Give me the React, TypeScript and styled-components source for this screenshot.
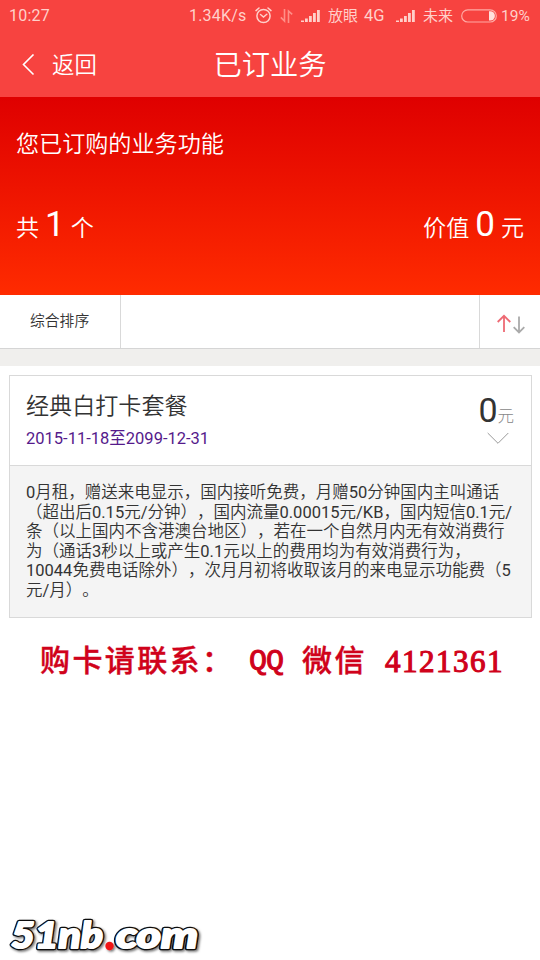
import React from "react";
import styled, { createGlobalStyle } from "styled-components";

const GlobalStyle = createGlobalStyle`
  * { box-sizing: border-box; }
  body {
    margin: 0;
    background: #fff;
    font-family: Roboto, "Noto Sans CJK SC", sans-serif;
    text-spacing-trim: space-all;
    color: #333;
  }
`;

const Screen = styled.div`
  display: flex;
  flex-direction: column;
  width: 540px;
  height: 960px;
  overflow: hidden;
  background: #fff;
  white-space: nowrap;
`;

const Header = styled.header`
  height: 97px;
  background: #f74340;
  color: #fff;
`;

const StatusBar = styled.div`
  display: flex;
  align-items: center;
  height: 32px;
  padding-left: 9px;
  font-size: 16px;
  color: #ffd0ca;
`;

const StatusText = styled.span<{ $w: number; $size?: number; $spacing?: number }>`
  width: ${(p) => p.$w}px;
  font-size: ${(p) => p.$size ?? 16}px;
  letter-spacing: ${(p) => p.$spacing ?? 0}px;
  line-height: 32px;
  flex: none;
`;

const StatusIcon = styled.svg<{ $gap: number }>`
  flex: none;
  margin: -1px ${(p) => p.$gap}px 0 0;
`;

const TitleBar = styled.div`
  display: grid;
  grid-template-columns: 170px 200px 170px;
  align-items: center;
  height: 65px;
`;

const BackButton = styled.button`
  display: flex;
  align-items: center;
  gap: 17px;
  height: 64px;
  padding: 0 0 0 22px;
  border: 0;
  background: none;
  color: #fff;
  font: 350 22.4px/62px Roboto, "Noto Sans CJK SC", sans-serif;
`;

const Title = styled.h1`
  margin: 2px 0 0;
  text-align: center;
  font-size: 28.3px;
  font-weight: 350;
  line-height: 64px;
`;

const Summary = styled.section`
  display: flex;
  flex-direction: column;
  justify-content: space-between;
  height: 198px;
  padding: 28px 16px 41px 16px;
  background: linear-gradient(#df0000, #ff2b00);
  color: #fff;
  font-size: 23.1px;
  font-weight: 350;
`;

const SummaryTitle = styled.div`
  line-height: 40px;
`;

const Totals = styled.div`
  display: flex;
  justify-content: space-between;
  line-height: 50px;
`;

const Count = styled.b`
  margin: 0 6px;
  font-size: 35px;
  font-weight: 400;
`;

const FilterBar = styled.div`
  display: grid;
  grid-template-columns: 121px 1fr 60px;
  height: 54px;
  border-bottom: 1px solid #d5d5d5;
`;

const FilterCell = styled.div<{ $divider?: boolean }>`
  border-right: ${(p) => (p.$divider ? "1px solid #d9d9d9" : "0")};
  padding-left: 30px;
  font-size: 14.8px;
  font-weight: 350;
  line-height: 52px;
`;

const SortCell = styled.div`
  display: flex;
  align-items: center;
  padding: 4px 0 0 16px;
`;

const Separator = styled.div`
  height: 17px;
  background: #f0efed;
`;

const Card = styled.article`
  width: 523px;
  height: 243px;
  margin: 9px 0 0 9px;
  border: 1px solid #d9d9d9;
`;

const CardHead = styled.div`
  display: flex;
  justify-content: space-between;
  height: 90px;
  padding: 13px 17px 0 16px;
  border-bottom: 1px solid #d9d9d9;
`;

const PlanName = styled.h2`
  margin: 0;
  font-size: 23.1px;
  font-weight: 350;
  line-height: 36px;
`;

const PlanDates = styled.div`
  font-size: 16.5px;
  line-height: 28px;
  color: #551a8b;
`;

const PriceBox = styled.div`
  display: flex;
  flex-direction: column;
  align-items: flex-end;
`;

const Price = styled.div`
  height: 42px;
  font-size: 34px;
  line-height: 42px;
`;

const Unit = styled.span`
  font-size: 16.5px;
  font-weight: 300;
  color: #888;
`;

const Chevron = styled.svg`
  margin: 1px 5px 0 0;
`;

const Details = styled.div`
  height: 151px;
  padding: 17px 0 0 16px;
  background: #f4f4f4;
  font-size: 16.5px;
  font-weight: 350;
  line-height: 19.6px;
`;

const DetailLine = styled.div`
  height: 19.6px;
`;

const Latin = styled.span`
  font-weight: 400;
`;

const Contact = styled.div`
  display: flex;
  margin: 24px 0 0 40px;
  color: #d0021b;
  line-height: 40px;
`;

const ContactLabel = styled.span<{ $w: number }>`
  width: ${(p) => p.$w}px;
  flex: none;
  font-family: "Noto Sans CJK SC", sans-serif;
  font-size: 30px;
  font-weight: 500;
  line-height: 32px;
  letter-spacing: 2.4px;
  -webkit-text-stroke: 0.4px currentColor;
`;

const ContactLetters = styled.span`
  width: 53px;
  flex: none;
  font-family: "Liberation Mono", monospace;
  font-size: 30px;
  letter-spacing: -1px;
  line-height: 41px;
  -webkit-text-stroke: 1px currentColor;
`;

const ContactDigits = styled.span`
  padding-left: 1px;
  font-family: "Liberation Serif", serif;
  font-size: 31px;
  letter-spacing: 1.5px;
  -webkit-text-stroke: 1.1px currentColor;
`;

const Watermark = styled.svg`
  margin: auto 0 0 4px;
  flex: none;
`;

const detailLines = [
  "0月租，赠送来电显示，国内接听免费，月赠50分钟国内主叫通话",
  "（超出后0.15元/分钟），国内流量0.00015元/KB，国内短信0.1元/",
  "条（以上国内不含港澳台地区），若在一个自然月内无有效消费行",
  "为（通话3秒以上或产生0.1元以上的费用均为有效消费行为，",
  "10044免费电话除外），次月月初将收取该月的来电显示功能费（5",
  "元/月）。",
];

const Signal = ({ gap }: { gap: number }) => (
  <StatusIcon $gap={gap} width="19" height="14" viewBox="0 0 19 14" fill="#ffd0ca">
    <path d="M0 11.5h3V13H0zM4 9.5h2.8V13H4zM8 7h2.8v6H8zM12 4h2.8v9H12zM16 1h2.8v12H16z" />
  </StatusIcon>
);

export default function App() {
  return (
    <>
      <GlobalStyle />
      <Screen>
        <Header>
          <StatusBar>
            <StatusText $w={180} $spacing={0.2}>10:27</StatusText>
            <StatusText $w={66} $spacing={0.2}>1.34K/s</StatusText>
            <StatusIcon $gap={8} width="17" height="17" viewBox="0 0 17 17" fill="none" stroke="#ffd0ca" strokeWidth="1.5" strokeLinecap="round">
              <circle cx="8.5" cy="9" r="6.6" />
              <path d="M5.5 7.5l3 2.5 3.3-2.8M1 3.6L4 1M16 3.6L13 1" />
            </StatusIcon>
            <StatusIcon $gap={8} width="13" height="14" viewBox="0 0 13 14" fill="none" stroke="#ff8f88" strokeWidth="1.6">
              <path d="M4.5 0v12L0.8 8.4M8.5 14V2L12.2 5.4" />
            </StatusIcon>
            <Signal gap={8} />
            <StatusText $w={36} $size={15}>放眼</StatusText>
            <StatusText $w={32} $size={16.5}>4G</StatusText>
            <Signal gap={8} />
            <StatusText $w={38} $size={15}>未来</StatusText>
            <StatusIcon $gap={4} width="36" height="14" viewBox="0 0 36 14" fill="none" stroke="#ffaaa4" strokeWidth="1.2">
              <rect x="0.7" y="0.8" width="34.6" height="12.2" rx="6.1" />
              <path d="M28 2.2h1.2a4.7 4.7 0 0 1 0 9.4H28z" fill="#ffe0dc" stroke="none" />
            </StatusIcon>
            <StatusText $w={34} $size={15.5}>19%</StatusText>
          </StatusBar>
          <TitleBar>
            <BackButton>
              <svg width="13" height="22" viewBox="0 0 13 22" fill="none" stroke="#fff" strokeWidth="1.6">
                <path d="M11.5 0.5L1.5 10.5l10 10" />
              </svg>
              返回
            </BackButton>
            <Title>已订业务</Title>
          </TitleBar>
        </Header>
        <Summary>
          <SummaryTitle>您已订购的业务功能</SummaryTitle>
          <Totals>
            <span>共<Count>1</Count>个</span>
            <span>价值<Count>0</Count>元</span>
          </Totals>
        </Summary>
        <FilterBar>
          <FilterCell $divider>综合排序</FilterCell>
          <FilterCell $divider />
          <SortCell>
            <svg width="30" height="20" viewBox="0 0 30 20" fill="none" strokeWidth="1.8">
              <path d="M8 18V2M1.7 8L8 1.8 14.3 8" stroke="#ee6a74" />
              <path d="M23 2.5v16M17.7 13.2l5.3 5.3 5.3-5.3" stroke="#aaa" />
            </svg>
          </SortCell>
        </FilterBar>
        <Separator />
        <Card>
          <CardHead>
            <div>
              <PlanName>经典白打卡套餐</PlanName>
              <PlanDates>2015-11-18至2099-12-31</PlanDates>
            </div>
            <PriceBox>
              <Price>0<Unit>元</Unit></Price>
              <Chevron width="22" height="13" viewBox="0 0 22 13" fill="none" stroke="#999" strokeWidth="1">
                <path d="M0.7 1L11 11.3 21.3 1" />
              </Chevron>
            </PriceBox>
          </CardHead>
          <Details>
            {detailLines.map((line) => (
              <DetailLine key={line}>
                {line.split(/([0-9A-Z./]+)/).map((run, i) => (i % 2 ? <Latin key={i}>{run}</Latin> : run))}
              </DetailLine>
            ))}
          </Details>
        </Card>
        <Contact>
          <ContactLabel $w={209}>购卡请联系：</ContactLabel>
          <ContactLetters>QQ</ContactLetters>
          <ContactLabel $w={82}>微信</ContactLabel>
          <ContactDigits>4121361</ContactDigits>
        </Contact>
        <Watermark width="210" height="52" viewBox="0 0 210 52">
          <defs>
            <filter id="shade" x="-10%" y="-20%" width="120%" height="150%">
              <feDropShadow dx="1.5" dy="1.5" stdDeviation="1.1" floodColor="#000" floodOpacity="0.55" />
            </filter>
          </defs>
          <g filter="url(#shade)" fontFamily="Lato, sans-serif" fontWeight="900" fontStyle="italic" fontSize="36" strokeLinejoin="round">
            <g fill="#111" stroke="#111" strokeWidth="4.6">
              <text x="7" y="40" textLength="92" lengthAdjust="spacingAndGlyphs">51nb</text>
              <text x="112" y="40" textLength="82" lengthAdjust="spacingAndGlyphs">com</text>
            </g>
            <circle cx="105.5" cy="38" r="4.2" fill="#f01818" />
          </g>
          <g aria-hidden="true" fontFamily="Lato, sans-serif" fontWeight="900" fontStyle="italic" fontSize="36" fill="#fff" stroke="#fff" strokeWidth="2" strokeLinejoin="round">
            <text x="7" y="40" textLength="92" lengthAdjust="spacingAndGlyphs">51nb</text>
            <text x="112" y="40" textLength="82" lengthAdjust="spacingAndGlyphs">com</text>
          </g>
        </Watermark>
      </Screen>
    </>
  );
}
